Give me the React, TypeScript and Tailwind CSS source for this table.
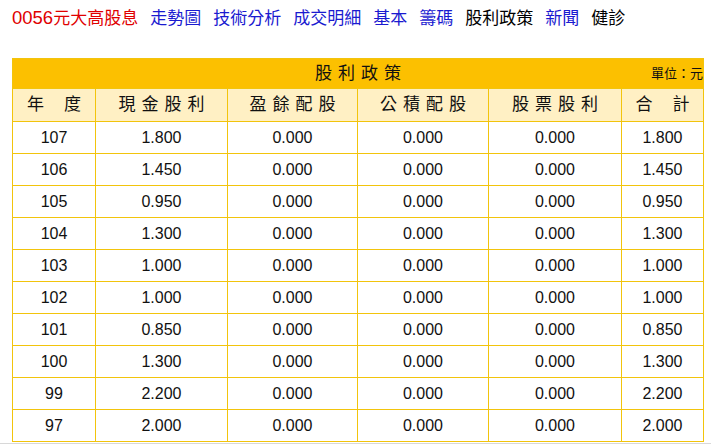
const rows: [string, string, string, string, string, string][] = [
  ['107', '1.800', '0.000', '0.000', '0.000', '1.800'],
  ['106', '1.450', '0.000', '0.000', '0.000', '1.450'],
  ['105', '0.950', '0.000', '0.000', '0.000', '0.950'],
  ['104', '1.300', '0.000', '0.000', '0.000', '1.300'],
  ['103', '1.000', '0.000', '0.000', '0.000', '1.000'],
  ['102', '1.000', '0.000', '0.000', '0.000', '1.000'],
  ['101', '0.850', '0.000', '0.000', '0.000', '0.850'],
  ['100', '1.300', '0.000', '0.000', '0.000', '1.300'],
  ['99', '2.200', '0.000', '0.000', '0.000', '2.200'],
  ['97', '2.000', '0.000', '0.000', '0.000', '2.000'],
];

const links = [
  { label: '走勢圖', active: false },
  { label: '技術分析', active: false },
  { label: '成交明細', active: false },
  { label: '基本', active: false },
  { label: '籌碼', active: false },
  { label: '股利政策', active: true },
  { label: '新聞', active: false },
  { label: '健診', active: true },
];

const widths = ['w-[82px]', 'w-[131px]', 'w-[129px]', 'w-[130px]', 'w-[132px]', 'w-[81px]'];

function SplitHead({ a, b }: { a: string; b: string }) {
  return (
    <div className="flex items-center justify-center gap-[20px]">
      <span>{a}</span>
      <span>{b}</span>
    </div>
  );
}

export default function App() {
  return (
    <div className="w-[711px] h-[447px] bg-white overflow-hidden font-['Liberation_Sans','Noto_Sans_CJK_TC',sans-serif]">
      {/* Top nav */}
      <div className="flex items-center gap-[12px] px-[12px] h-[36px] pt-[1px] text-[17px] leading-none">
        <span className="text-[#e00000]">
          <span className="text-[18.5px]">0056</span>元大高股息
        </span>
        {links.map(l => (
          <span key={l.label} className={l.active ? 'text-black' : 'text-[#1a1ad0]'}>
            {l.label}
          </span>
        ))}
      </div>

      <div className="pt-[22px] px-[12px] border-b border-[#d8d8d8] pb-[1px]">
        <table className="w-[691px] border-separate border-spacing-[1px] bg-[#f2c40c] table-fixed text-[16px] text-[#111]">
          <colgroup>
            {widths.map(w => (
              <col key={w} className={w} />
            ))}
          </colgroup>
          <thead>
            <tr>
              <th colSpan={6} className="h-[29px] bg-[#fcc000] font-normal p-0">
                <div className="relative flex items-center justify-center h-full">
                  <span className="text-[17px] tracking-[6px] pl-[6px]">股利政策</span>
                  <span className="absolute right-[0px] text-[13px]">單位：元</span>
                </div>
              </th>
            </tr>
            <tr className="text-[17px]">
              <th className="h-[32px] bg-[#fff0c4] font-normal p-0">
                <SplitHead a="年" b="度" />
              </th>
              {['現金股利', '盈餘配股', '公積配股', '股票股利'].map(h => (
                <th key={h} className="h-[32px] bg-[#fff0c4] font-normal p-0 tracking-[6px] pl-[6px]">
                  {h}
                </th>
              ))}
              <th className="h-[32px] bg-[#fff0c4] font-normal p-0">
                <SplitHead a="合" b="計" />
              </th>
            </tr>
          </thead>
          <tbody>
            {rows.map(r => (
              <tr key={r[0]}>
                {r.map((c, i) => (
                  <td key={i} className="h-[31px] bg-white text-center p-0">
                    {c}
                  </td>
                ))}
              </tr>
            ))}
          </tbody>
        </table>
      </div>
    </div>
  );
}
